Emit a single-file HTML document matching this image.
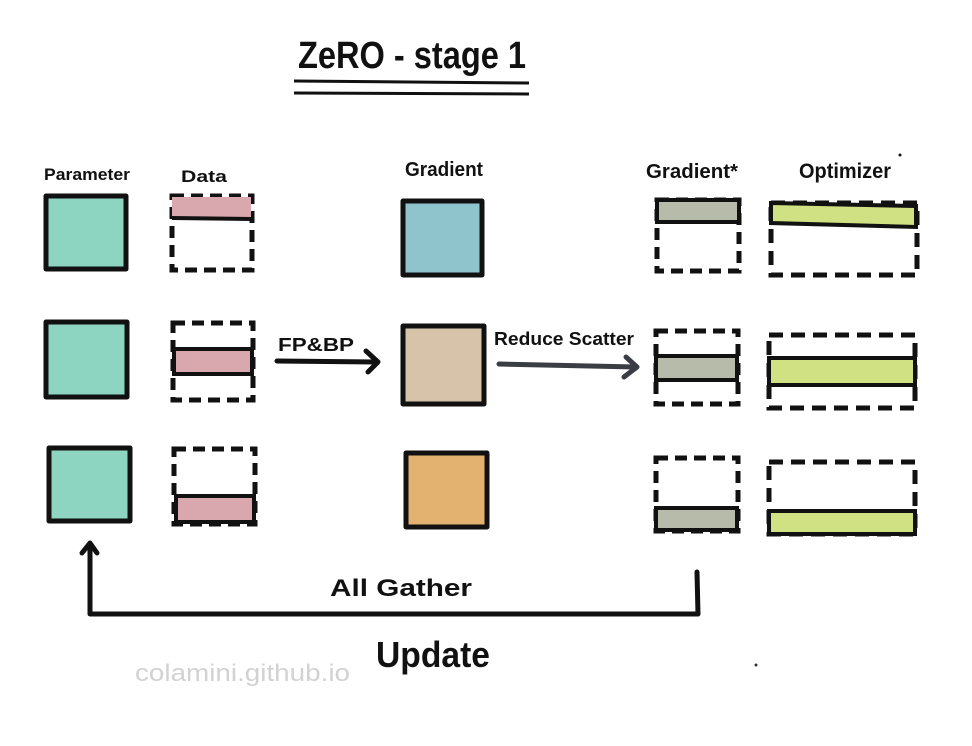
<!DOCTYPE html>
<html><head><meta charset="utf-8"><style>
html,body{margin:0;padding:0;background:#fff;}
svg{display:block}
text{font-family:"Liberation Sans",sans-serif;fill:#111;}
</style></head><body>
<svg width="972" height="746" viewBox="0 0 972 746" xmlns="http://www.w3.org/2000/svg">
<rect width="972" height="746" fill="#fff"/>
<!-- title -->
<text x="298" y="68" font-size="38" font-weight="bold" textLength="228" lengthAdjust="spacingAndGlyphs">ZeRO - stage 1</text>
<line x1="294" y1="81" x2="529" y2="83" stroke="#111" stroke-width="3"/>
<line x1="294" y1="93" x2="529" y2="94" stroke="#111" stroke-width="3"/>
<!-- headers -->
<text x="44" y="180" font-size="17" font-weight="bold" textLength="86" lengthAdjust="spacingAndGlyphs">Parameter</text>
<text x="181" y="182" font-size="17" font-weight="bold" textLength="46" lengthAdjust="spacingAndGlyphs">Data</text>
<text x="405" y="176" font-size="20" font-weight="bold" textLength="78" lengthAdjust="spacingAndGlyphs">Gradient</text>
<text x="646" y="178" font-size="20" font-weight="bold" textLength="92" lengthAdjust="spacingAndGlyphs">Gradient*</text>
<text x="799" y="178" font-size="21" font-weight="bold" textLength="92" lengthAdjust="spacingAndGlyphs">Optimizer</text>
<circle cx="900" cy="155" r="1.5" fill="#111"/>
<g stroke="#111" stroke-width="5" stroke-linejoin="round">
<rect x="46" y="196" width="80" height="73" fill="#8dd5c0"/>
<rect x="46" y="322" width="81" height="75" fill="#8dd5c0"/>
<rect x="49" y="448" width="81" height="73" fill="#8dd5c0"/>
<rect x="403" y="201" width="79" height="74" fill="#8fc4cd"/>
<rect x="403" y="326" width="81" height="78" fill="#d6c3a9"/>
<rect x="406" y="453" width="81" height="74" fill="#e4b270"/>
</g>
<g stroke="#111" stroke-width="5" fill="none">
<rect x="172" y="196" width="80" height="74" stroke-dasharray="12,7"/>
<rect x="173" y="323" width="80" height="77" stroke-dasharray="12,7"/>
<rect x="174" y="449" width="81" height="75" stroke-dasharray="12,7"/>
<rect x="657" y="200" width="82" height="71" stroke-dasharray="12,7"/>
<rect x="656" y="331" width="82" height="73" stroke-dasharray="12,7"/>
<rect x="656" y="458" width="82" height="73" stroke-dasharray="12,7"/>
<rect x="771" y="203" width="146" height="72" stroke-dasharray="14,8"/>
<rect x="769" y="335" width="146" height="73" stroke-dasharray="14,8"/>
<rect x="769" y="462" width="146" height="72" stroke-dasharray="14,8"/>
</g>
<g stroke="#111" stroke-width="4">
<rect x="172" y="197" width="79" height="21" fill="#d9a8ae" stroke="none"/>
<line x1="172" y1="218" x2="252" y2="219"/>
<rect x="174" y="349" width="78" height="25" fill="#d9a8ae"/>
<rect x="176" y="496" width="78" height="26" fill="#d9a8ae"/>
<rect x="657" y="200" width="82" height="22" fill="#b7bba9"/>
<rect x="656" y="356" width="81" height="24" fill="#b7bba9"/>
<rect x="656" y="508" width="81" height="22" fill="#b7bba9"/>
<path d="M771 203 L916 206 L916 227 L771 223 Z" fill="#d0e184"/>
<rect x="769" y="358" width="146" height="27" fill="#d0e184"/>
<rect x="769" y="511" width="146" height="23" fill="#d0e184"/>
</g>
<g fill="none" stroke-linecap="round" stroke-linejoin="round">
<path d="M277 361 L376 362 M366 351 L378 362 L368 372" stroke="#111" stroke-width="5"/>
<path d="M499 364 L637 367 M626 357 L637 367 M624 377 L637 367" stroke="#3a3d44" stroke-width="5"/>
<path d="M697 572 L698 614 L90 614 L90 544 M82 553 L90 543 L97 553" stroke="#111" stroke-width="5"/>
</g>
<text x="278" y="351" font-size="18" font-weight="bold" textLength="76" lengthAdjust="spacingAndGlyphs">FP&amp;BP</text>
<text x="494" y="345" font-size="18" font-weight="bold" textLength="140" lengthAdjust="spacingAndGlyphs">Reduce Scatter</text>
<text x="330" y="596" font-size="24" font-weight="bold" textLength="142" lengthAdjust="spacingAndGlyphs">All Gather</text>
<text x="376" y="667" font-size="36" font-weight="bold" textLength="114" lengthAdjust="spacingAndGlyphs">Update</text>
<text x="135" y="681" font-size="24" style="fill:#d2d2d2" textLength="215" lengthAdjust="spacingAndGlyphs">colamini.github.io</text>
<circle cx="756" cy="665" r="1.5" fill="#333"/>
</svg>
</body></html>
